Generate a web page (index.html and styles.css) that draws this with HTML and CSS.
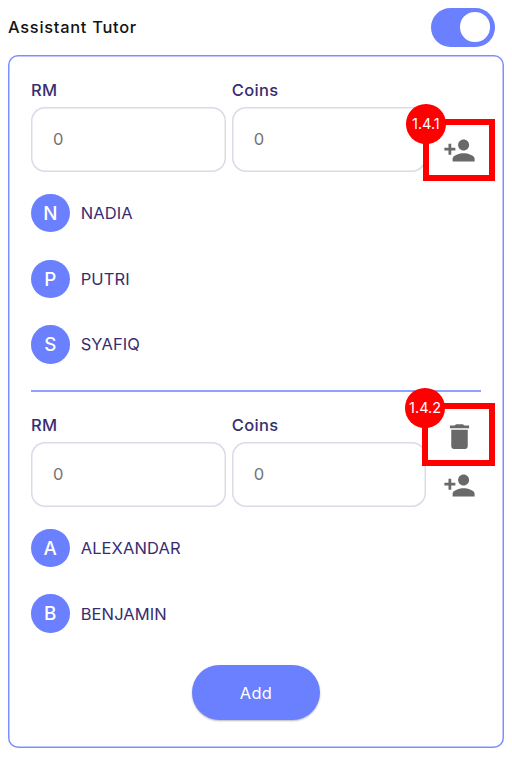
FILE: index.html
```html
<!DOCTYPE html>
<html lang="en">
<head>
<meta charset="utf-8">
<title>Assistant Tutor</title>
<link rel="stylesheet" href="styles.css">
</head>
<body>
<svg width="0" height="0" class="defs" aria-hidden="true">
  <symbol id="person-add" viewBox="0 0 24 24"><path d="M15 12c2.21 0 4-1.79 4-4s-1.79-4-4-4-4 1.79-4 4 1.79 4 4 4zm-9-2V7H4v3H1v2h3v3h2v-3h3v-2H6zm9 4c-2.67 0-8 1.34-8 4v2h16v-2c0-2.66-5.33-4-8-4z"/></symbol>
  <symbol id="delete" viewBox="0 0 24 24"><path d="M6 19c0 1.1.9 2 2 2h8c1.100 0 2-.9 2-2V7H6v12zM19 4h-3.500l-1-1h-5l-1 1H5v2h14V4z"/></symbol>
</svg>
<header class="header">
  <h1 class="title">Assistant Tutor</h1>
  <div class="toggle" role="switch" aria-checked="true"><span class="knob"></span></div>
</header>
<main class="card">
  <section class="group">
    <div class="fields">
      <div class="field"><span class="label">RM</span><div class="input">0</div></div>
      <div class="field"><span class="label">Coins</span><div class="input">0</div></div>
      <div class="actions">
        <svg class="icon"><use href="#person-add"/></svg>
        <div class="callout first"><span class="badge">1.4.1</span></div>
      </div>
    </div>
    <ul class="people">
      <li class="person"><span class="avatar">N</span><span>NADIA</span></li>
      <li class="person"><span class="avatar">P</span><span>PUTRI</span></li>
      <li class="person"><span class="avatar">S</span><span>SYAFIQ</span></li>
    </ul>
  </section>
  <div class="divider"></div>
  <section class="group">
    <div class="fields">
      <div class="field"><span class="label">RM</span><div class="input">0</div></div>
      <div class="field"><span class="label">Coins</span><div class="input">0</div></div>
      <div class="actions">
        <svg class="icon"><use href="#delete"/></svg>
        <svg class="icon"><use href="#person-add"/></svg>
        <div class="callout second"><span class="badge">1.4.2</span></div>
      </div>
    </div>
    <ul class="people">
      <li class="person"><span class="avatar">A</span><span>ALEXANDAR</span></li>
      <li class="person"><span class="avatar">B</span><span>BENJAMIN</span></li>
    </ul>
  </section>
  <button class="add">Add</button>
</main>
</body>
</html>
```

FILE: styles.css
```css
* { box-sizing: border-box; }
body {
  margin: 0;
  padding: 7.5px 8px 0;
  background: #fff;
  color: #382d70;
  font-family: Inter, sans-serif;
  font-size: 16.5px;
  font-weight: 400;
  letter-spacing: 0.1px;
}
.defs { position: absolute; }
.header {
  display: flex;
  align-items: center;
  justify-content: space-between;
  height: 39.5px;
  padding-right: 9px;
}
.title {
  margin: 0;
  color: #141414;
  font-size: 16.4px;
  font-weight: 500;
  letter-spacing: 0.73px;
}
.toggle {
  display: flex;
  align-items: center;
  justify-content: flex-end;
  width: 64px;
  height: 39.5px;
  padding-right: 5px;
  border-radius: 20px;
  background: #6b80ff;
}
.knob {
  width: 29.6px;
  height: 29.6px;
  border-radius: 50%;
  background: #fff;
}
.card {
  height: 693.4px;
  margin-top: 7.5px;
  padding: 22.9px 23px 0;
  border-radius: 10px;
  box-shadow: inset 0 0 0 1.5px #7d8fff;
}
.fields {
  display: flex;
  gap: 6px;
  height: 94.4px;
}
.field { width: 194.7px; flex: none; }
.label {
  display: block;
  height: 29.4px;
  line-height: 26px;
  font-weight: 500;
  letter-spacing: 0.35px;
}
.input {
  height: 65px;
  padding-left: 22px;
  border-radius: 14px;
  box-shadow: inset 0 0 0 1.5px #dcdae8;
  color: #737373;
  line-height: 64.5px;
}
.actions {
  position: relative;
  display: flex;
  flex-direction: column;
  justify-content: flex-end;
  gap: 16.5px;
  padding: 0 0 4.5px 11px;
}
.icon {
  display: block;
  width: 33px;
  height: 33px;
  fill: #696969;
}
.callout {
  position: absolute;
  width: 72.5px;
  height: 62.5px;
  border: 6px solid #f00;
}
.first { left: -9.5px; top: 41.4px; }
.second { left: -10.3px; top: -9.2px; }
.badge {
  position: absolute;
  left: -22.8px;
  top: -20.8px;
  width: 39.6px;
  height: 39.6px;
  border-radius: 50%;
  background: #f00;
  color: #fff;
  font-size: 14.5px;
  letter-spacing: 0;
  line-height: 40.5px;
  text-align: center;
}
.people {
  display: grid;
  gap: 27.1px;
  margin: 0;
  padding: 22.2px 0 0;
  list-style: none;
}
.person {
  display: flex;
  align-items: center;
  gap: 11.2px;
  height: 38.5px;
}
.avatar {
  width: 38.5px;
  height: 38.5px;
  border-radius: 50%;
  background: #6b80ff;
  color: #fff;
  font-size: 18.8px;
  font-weight: 500;
  letter-spacing: 0;
  line-height: 40px;
  text-align: center;
}
.divider {
  height: 2px;
  margin: 26px 0 20.6px;
  background: #92a1ff;
}
.add {
  display: block;
  width: 127.5px;
  height: 55px;
  margin: 32.4px auto 0;
  padding: 0;
  border: 0;
  border-radius: 27.5px;
  background: #6b80ff;
  box-shadow: 0 1px 2px rgba(0, 0, 0, 0.28);
  color: #fff;
  font: 400 16.4px Inter, sans-serif;
  letter-spacing: 0.4px;
}
```
